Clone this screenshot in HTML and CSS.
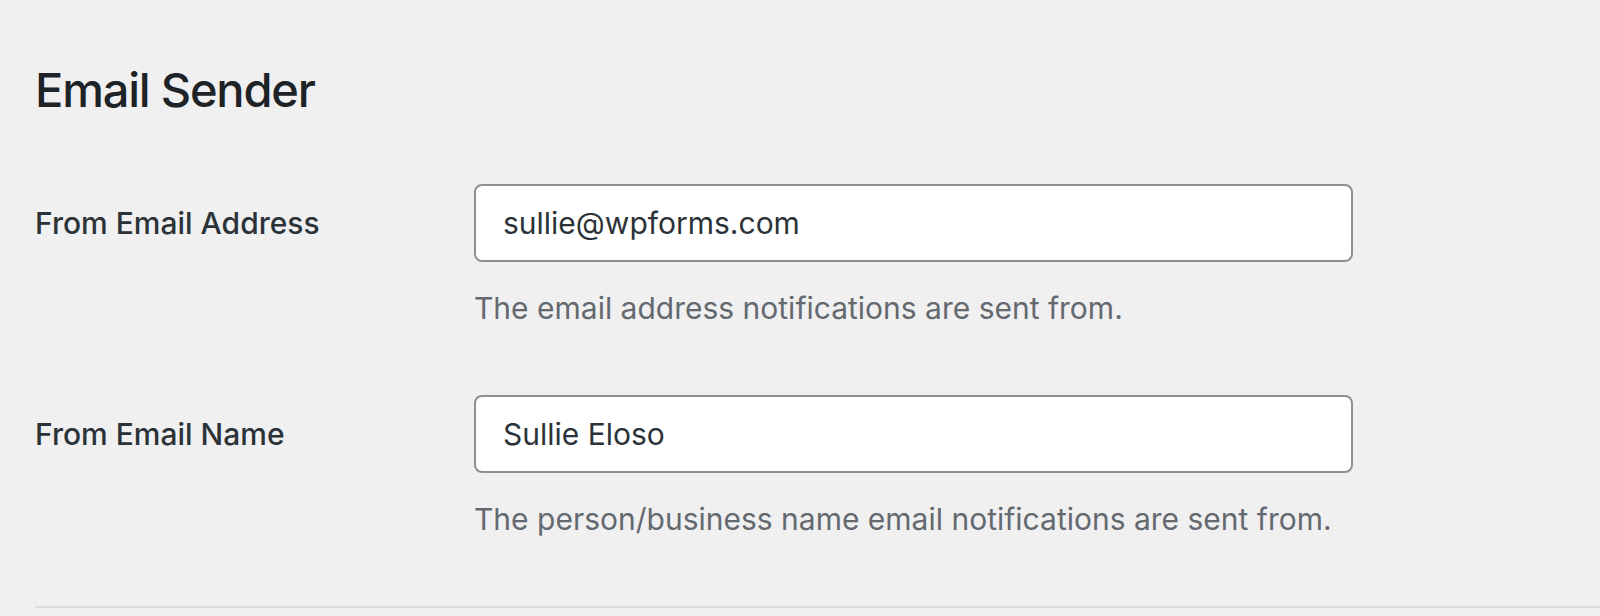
FILE: index.html
```html
<!DOCTYPE html>
<html lang="en">
<head>
<meta charset="utf-8">
<title>Email Sender</title>
<link rel="stylesheet" href="styles.css">
</head>
<body>
<div class="wrap">
  <h2 class="section-title">Email Sender</h2>
  <div class="form-table">
    <div class="row">
      <label class="label" for="from-email">From Email Address</label>
      <div class="field">
        <input class="text-input" id="from-email" type="text" value="sullie@wpforms.com">
        <p class="desc">The email address notifications are sent from.</p>
      </div>
    </div>
    <div class="row">
      <label class="label" for="from-name">From Email Name</label>
      <div class="field">
        <input class="text-input" id="from-name" type="text" value="Sullie Eloso">
        <p class="desc">The person/business name email notifications are sent from.</p>
      </div>
    </div>
  </div>
  <div class="divider"></div>
</div>
</body>
</html>
```

FILE: styles.css
```css
html, body {
  margin: 0;
  padding: 0;
  background: #f0f0f1;
}
body {
  font-family: Inter, "Noto Sans", "Liberation Sans", sans-serif;
  color: #1d2327;
  height: 616px;
  overflow: hidden;
}
.wrap {
  padding-left: 35px;
}
.section-title {
  margin: 61px 0 32px;
  font-size: 47px;
  line-height: 58px;
  font-weight: 500;
  color: #1d2327;
  letter-spacing: -1.2px;
}
.form-table {
  display: flex;
  flex-direction: column;
}
.row {
  display: grid;
  grid-template-columns: 439px 879px;
  padding: 33px 0 34px;
}
.label {
  font-size: 30px;
  line-height: 78px;
  font-weight: 500;
  color: #2c3338;
}
.field {
  display: flex;
  flex-direction: column;
}
.text-input {
  box-sizing: border-box;
  width: 879px;
  height: 78px;
  margin: 0;
  padding: 0 27px;
  border: 2px solid #8c8f94;
  border-radius: 8px;
  background: #fff;
  font-family: Inter, "Noto Sans", "Liberation Sans", sans-serif;
  font-size: 30px;
  color: #2c3338;
  outline: none;
}
.desc {
  margin: 26px 0 0;
  font-size: 30px;
  line-height: 40px;
  color: #646970;
}
.divider {
  margin-top: 33px;
  height: 2px;
  background: #dcdcde;
}
```
